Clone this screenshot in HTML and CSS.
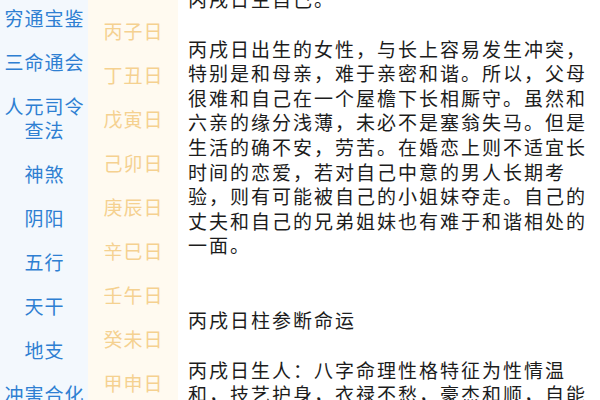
FILE: index.html
```html
<!DOCTYPE html>
<html lang="zh">
<head>
<meta charset="utf-8">
<title>丙戌日</title>
<link rel="stylesheet" href="styles.css">
</head>
<body>
<div class="page">
  <nav class="cats">
    <ul class="cat-list">
      <li class="cat">穷通宝鉴</li>
      <li class="cat">三命通会</li>
      <li class="cat">人元司令查法</li>
      <li class="cat">神煞</li>
      <li class="cat">阴阳</li>
      <li class="cat">五行</li>
      <li class="cat">天干</li>
      <li class="cat">地支</li>
      <li class="cat">冲害合化</li>
    </ul>
  </nav>
  <aside class="days">
    <ul class="day-list">
      <li class="day">丙子日</li>
      <li class="day">丁丑日</li>
      <li class="day">戊寅日</li>
      <li class="day">己卯日</li>
      <li class="day">庚辰日</li>
      <li class="day">辛巳日</li>
      <li class="day">壬午日</li>
      <li class="day">癸未日</li>
      <li class="day">甲申日</li>
    </ul>
  </aside>
  <main class="article">
    <p class="para first">丙戌日生自己。</p>
    <p class="para">丙戌日出生的女性，与长上容易发生冲突，特别是和母亲，难于亲密和谐。所以，父母很难和自己在一个屋檐下长相厮守。虽然和六亲的缘分浅薄，未必不是塞翁失马。但是生活的确不安，劳苦。在婚恋上则不适宜长时间的恋爱，若对自己中意的男人长期考验，则有可能被自己的小姐妹夺走。自己的丈夫和自己的兄弟姐妹也有难于和谐相处的一面。</p>
    <p class="para heading">丙戌日柱参断命运</p>
    <p class="para">丙戌日生人：八字命理性格特征为性情温和，技艺护身，衣禄不愁，豪杰和顺，自能成家。</p>
  </main>
</div>
</body>
</html>
```

FILE: styles.css
```css
html, body {
  margin: 0;
  padding: 0;
  background: #ffffff;
}

.page {
  display: flex;
  width: 600px;
  height: 400px;
  overflow: hidden;
  font-family: "Noto Sans CJK SC", "Noto Sans", sans-serif;
}

ul {
  list-style: none;
  margin: 0;
  padding: 0;
}

.cats {
  width: 88px;
  flex: none;
  background: #f3f8fd;
}

.cat-list {
  margin-top: -4px;
}

.cat {
  padding: 10px 0 10px 1px;
  line-height: 24px;
  font-size: 19px;
  letter-spacing: 1px;
  text-align: center;
  color: #2e7fd2;
}

.days {
  width: 90px;
  flex: none;
  background: #fffaf0;
}

.day-list {
  padding-top: 9px;
}

.day {
  padding: 10px 0 10px 1px;
  line-height: 24px;
  font-size: 19px;
  letter-spacing: 1px;
  text-align: center;
  color: #f5d190;
}

.article {
  flex: 1;
  padding: 0 8px 0 10px;
  color: #1c1c1c;
  font-size: 19px;
  letter-spacing: 2px;
  line-height: 24.6px;
}

.para {
  margin: 25px 0 0;
}

.para.first {
  margin-top: -13px;
}

.para.heading {
  margin-top: 50px;
}
```
